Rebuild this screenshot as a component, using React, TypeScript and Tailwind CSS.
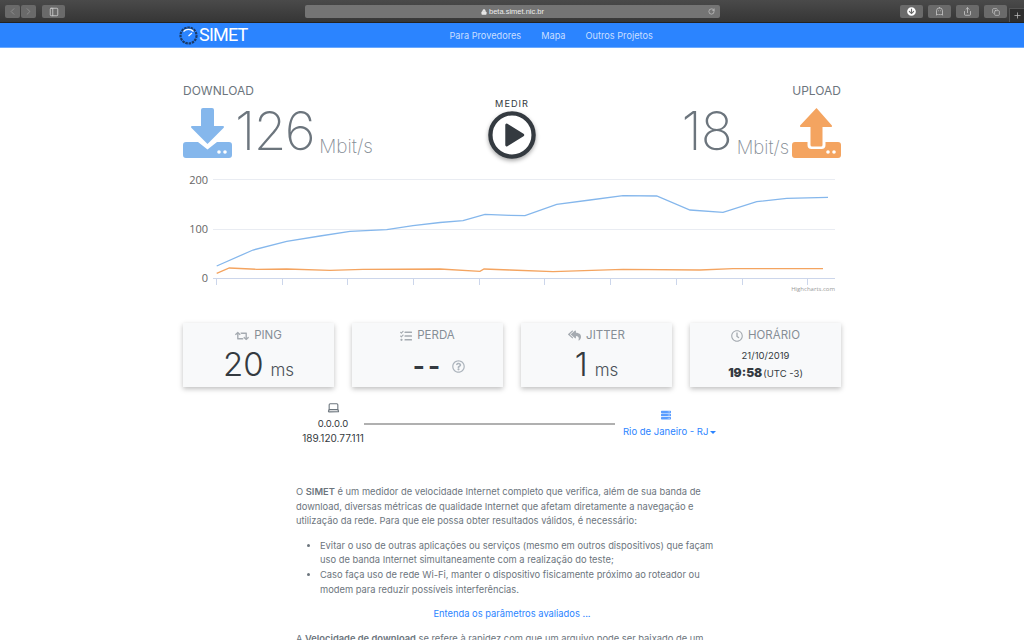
import { ChevronLeft, ChevronRight, Lock, Plus, RotateCw, Share, Copy, PanelLeft, Laptop, Ghost } from 'lucide-react';
import { FaRetweet, FaTasks, FaReplyAll, FaRegClock, FaRegQuestionCircle, FaServer, FaArrowCircleDown } from 'react-icons/fa';

const blueLine = '216.7,266 253,250 286.7,241.3 320,236 350,231.3 386.7,229.7 413,225.7 440,222.5 463,220.7 485,214.3 510,215.3 525,215.7 556.7,204.3 590,200 623,195.7 656.7,196 690,210 723,212.3 756.7,201.7 786.7,198.3 828,197.3';
const orangeLine = '216.7,273.3 229.3,268 256.7,269.3 286.7,269 330,270.3 363,269.3 440,269 480,271.3 484,269 510,270 553,271.7 623,269.3 700,270 733,268.7 823,268.7';
const ticks = [216, 282, 347, 413, 479, 544, 610, 676, 742, 807];

function Tray({ color, kind }: { color: string; kind: 'down' | 'up' }) {
  return (
    <svg width="49" height="50" viewBox="0 0 49 50" className="shrink-0">
      {kind === 'down' ? (
        <>
          <path d="M0 37a3 3 0 0 1 3-3h12l9.500 7.500L34 34h12a3 3 0 0 1 3 3v10a3 3 0 0 1-3 3H3a3 3 0 0 1-3-3z" fill={color} />
          <path d="M18 2a2 2 0 0 1 2-2h9a2 2 0 0 1 2 2v16h9a1 1 0 0 1 .7 1.700L24.500 36 8.300 19.700A1 1 0 0 1 9 18h9z" fill={color} />
          <circle cx="36" cy="44" r="1.800" fill="#fff" />
          <circle cx="42" cy="44" r="1.800" fill="#fff" />
        </>
      ) : (
        <>
          <path d="M0 37a3 3 0 0 1 3-3h12.500v3a4 4 0 0 0 4 4h10a4 4 0 0 0 4-4v-3H46a3 3 0 0 1 3 3v10a3 3 0 0 1-3 3H3a3 3 0 0 1-3-3z" fill={color} />
          <path d="M18.500 37a1.500 1.500 0 0 0 1.500 1.500h9a1.500 1.500 0 0 0 1.500-1.500V19h8.500a1 1 0 0 0 .7-1.700L24.500 0 8.300 17.300A1 1 0 0 0 9 19h9.500z" fill={color} />
          <circle cx="36" cy="44" r="1.800" fill="#fff" />
          <circle cx="42" cy="44" r="1.800" fill="#fff" />
        </>
      )}
    </svg>
  );
}

function Chart() {
  return (
    <svg width="1024" height="130" viewBox="0 170 1024 130" className="block ml-[-183px] mt-[-1px]">
      {[179.5, 229.5].map((y) => (
        <line key={y} x1="213" x2="835" y1={y} y2={y} stroke="#e9ecf2" />
      ))}
      <line x1="213" x2="835" y1="278.500" y2="278.500" stroke="#ccd6eb" />
      {ticks.map((x) => (
        <line key={x} x1={x + 0.5} x2={x + 0.5} y1="278" y2="285" stroke="#ccd6eb" />
      ))}
      <polyline points={blueLine} fill="none" stroke="#85b7ec" strokeWidth="1.300" />
      <polyline points={orangeLine} fill="none" stroke="#f4a460" strokeWidth="1.300" />
      <g fill="#666666" fontSize="11" textAnchor="end" fontFamily="'Open Sans', sans-serif">
        <text x="208" y="183.500">200</text>
        <text x="208" y="233">100</text>
        <text x="208" y="282">0</text>
      </g>
      <text x="835" y="290.500" textAnchor="end" fontSize="6" fill="#999999" fontFamily="'Open Sans', sans-serif">Highcharts.com</text>
    </svg>
  );
}

function Card({ icon, title, children }: { icon: React.ReactNode; title: string; children: React.ReactNode }) {
  return (
    <div className="w-[151px] h-[64px] bg-[#f8f9fa] shadow-[0_2px_5px_rgba(0,0,0,0.25)] flex flex-col items-center pt-[5px]">
      <div className="flex items-center gap-[5px] text-[11.500px] leading-[15px] text-[#868e96]">
        <span className="text-[#a5abb1]">{icon}</span>
        {title}
      </div>
      {children}
    </div>
  );
}

function ChromeButton({ children, w = 'w-[23px]' }: { children: React.ReactNode; w?: string }) {
  return <div className={`${w} h-[13px] rounded-[2px] bg-[#6a6a6a] flex items-center justify-center text-[#cfcfcf]`}>{children}</div>;
}

export default function App() {
  return (
    <div className="h-[640px] w-[1024px] overflow-hidden bg-white font-['Inter',sans-serif]">
      {/* browser chrome */}
      <div className="h-[23px] bg-gradient-to-b from-[#4a4a4a] to-[#363636] border-b border-[#222] flex items-start pt-[5px] pl-[5px] relative">
        <div className="flex gap-px">
          <ChromeButton w="w-[15px]"><ChevronLeft size={11} className="text-[#8f8f8f]" /></ChromeButton>
          <ChromeButton w="w-[15px]"><ChevronRight size={11} className="text-[#8f8f8f]" /></ChromeButton>
        </div>
        <div className="ml-[6px]"><ChromeButton><PanelLeft size={10} /></ChromeButton></div>
        <div className="ml-[240px] w-[415px] h-[13px] rounded-[2px] bg-[#747474] flex items-center justify-center relative text-[7.500px] text-[#ececec] font-['Liberation_Sans',sans-serif]">
          <Lock size={6} className="mr-[2px]" fill="#e6e6e6" />
          beta.simet.nic.br
          <RotateCw size={7} className="absolute right-[5px] text-[#d8d8d8]" />
        </div>
        <div className="ml-[180px] flex gap-[5px]">
          <ChromeButton><FaArrowCircleDown size={9} className="text-white" /></ChromeButton>
          <ChromeButton><Ghost size={9} /></ChromeButton>
          <ChromeButton><Share size={9} /></ChromeButton>
          <ChromeButton><Copy size={8} /></ChromeButton>
        </div>
        <div className="absolute right-0 top-[8px] w-[15px] h-[14px] bg-[#2e2e2e] border-l border-t border-[#555] flex items-center justify-center text-[#bdbdbd]">
          <Plus size={9} />
        </div>
      </div>

      {/* navbar */}
      <nav className="h-[24px] bg-[#2b84ff] border-b border-[#6aa9ff] box-content -mb-px">
        <div className="w-[658px] mx-auto h-full flex items-center relative">
          <svg width="19" height="19" viewBox="0 0 19 19" className="ml-[-4px] shrink-0">
            <circle cx="9.500" cy="9.500" r="8" fill="none" stroke="#1b3a66" strokeWidth="2.200" strokeDasharray="2.500 0.800" />
            <path d="M4.500 5.500A7 7 0 0 1 14.500 5.500" fill="none" stroke="#ffffff" strokeWidth="1.200" />
            <path d="M9.500 10L13 7" stroke="#ffffff" strokeWidth="1.200" />
          </svg>
          <span className="text-[18px] leading-none text-white font-['Roboto',sans-serif] tracking-[-0.8px] ml-px">SIMET</span>
          <div className="ml-[202px] mt-px flex gap-[20px] text-[9.200px] text-[#c9dfff]">
            <span>Para Provedores</span>
            <span>Mapa</span>
            <span>Outros Projetos</span>
          </div>
        </div>
      </nav>

      <main className="w-[658px] mx-auto">
        {/* speeds */}
        <div className="flex justify-between pt-[36px] h-[124px] relative">
          <div>
            <div className="text-[12px] leading-[15px] text-[#6c757d]">DOWNLOAD</div>
            <div className="flex items-end mt-[7px] text-[#6c757d] font-[250]">
              <Tray color="#85b7ec" kind="down" />
              <span className="text-[53px] leading-[53px] ml-[3px] tracking-[-1.500px]">126</span>
              <span className="text-[19px] leading-[20px] ml-[5px] mb-[1px] text-[#868e96]">Mbit/s</span>
            </div>
          </div>
          <div className="absolute left-[305px] top-[51px] w-[48px] flex flex-col items-center">
            <div className="text-[9.200px] leading-[12px] tracking-[1px] text-[#343a40]">MEDIR</div>
            <svg width="48" height="48" viewBox="0 0 50 50" className="mt-[1px] drop-shadow-[0_2px_2px_rgba(0,0,0,0.35)]">
              <circle cx="25" cy="25" r="22.500" fill="#fff" stroke="#343a40" strokeWidth="4.500" />
              <path d="M18 14.500a1.500 1.500 0 0 1 2.200-1.300L37 23.700a1.500 1.500 0 0 1 0 2.600L20.200 36.800A1.500 1.500 0 0 1 18 35.500z" fill="#343a40" />
            </svg>
          </div>
          <div className="flex flex-col items-end">
            <div className="text-[12px] leading-[15px] text-[#6c757d]">UPLOAD</div>
            <div className="flex items-end mt-[7px] text-[#6c757d] font-[250]">
              <span className="text-[53px] leading-[53px] tracking-[-1px]">18</span>
              <span className="text-[18.500px] leading-[20px] ml-[5px] mb-[1px] mr-[3px] text-[#868e96]">Mbit/s</span>
              <Tray color="#f4a460" kind="up" />
            </div>
          </div>
        </div>

        <Chart />

        {/* cards */}
        <div className="flex justify-between mt-[23px]">
          <Card icon={<FaRetweet size={14} />} title="PING">
            <div className="flex items-baseline gap-[7px] text-[#343a40] font-light mt-[2px]">
              <span className="text-[33px] leading-[38px]">20</span>
              <span className="text-[17px] leading-none text-[#495057]">ms</span>
            </div>
          </Card>
          <Card icon={<FaTasks size={12} />} title="PERDA">
            <div className="flex items-center gap-[9px] mt-[9px] ml-[23px] text-[#343a40]">
              <span className="text-[26px] leading-[28px] tracking-[3px] font-bold">--</span>
              <FaRegQuestionCircle size={13} className="text-[#adb5bd]" />
            </div>
          </Card>
          <Card icon={<FaReplyAll size={13} />} title="JITTER">
            <div className="flex items-baseline gap-[7px] text-[#343a40] font-light mt-[2px]">
              <span className="text-[33px] leading-[38px]">1</span>
              <span className="text-[17px] leading-none text-[#495057]">ms</span>
            </div>
          </Card>
          <Card icon={<FaRegClock size={12} />} title="HORÁRIO">
            <div className="text-[9.500px] leading-[12px] text-[#343a40] mt-[7px]">21/10/2019</div>
            <div className="flex items-baseline gap-px text-[#343a40] mt-[3px]">
              <span className="text-[12px] leading-[15px] font-black">19:58</span>
              <span className="text-[9.500px]">(UTC -3)</span>
            </div>
          </Card>
        </div>

        {/* route */}
        <div className="flex items-start mt-[14px] ml-[119px] text-[9.500px]">
          <div className="flex flex-col items-center w-[62px] text-[#343a40] leading-[15px]">
            <Laptop size={13} className="text-[#6c757d]" />
            <span className="mt-[2px]">0.0.0.0</span>
            <span className="text-[10px]">189.120.77.111</span>
          </div>
          <div className="w-[251px] h-[2px] bg-[#b0b0b0] mt-[22px]" />
          <div className="flex flex-col items-center ml-[8px] mt-[9px] text-[#2b84ff]">
            <FaServer size={10} className="text-[#5a9dff] mr-[8px]" />
            <span className="mt-[5px] leading-[14px] flex items-center gap-[2px]">
              Rio de Janeiro - RJ
              <span className="inline-block border-x-[3px] border-t-[3px] border-x-transparent border-t-[#2b84ff]" />
            </span>
          </div>
        </div>

        {/* text */}
        <div className="w-[432px] mx-auto mt-[39px] text-[9.350px] leading-[14.600px] text-[#6c757d]">
          <p>
            O <b className="font-semibold">SIMET</b> é um medidor de velocidade Internet completo que verifica, além de sua banda de download, diversas métricas de qualidade Internet que afetam diretamente a navegação e utilização da rede. Para que ele possa obter resultados válidos, é necessário:
          </p>
          <ul className="list-disc pl-[24px] mt-[10px]">
            <li>Evitar o uso de outras aplicações ou serviços (mesmo em outros dispositivos) que façam uso de banda Internet simultaneamente com a realização do teste;</li>
            <li>Caso faça uso de rede Wi-Fi, manter o dispositivo fisicamente próximo ao roteador ou modem para reduzir possíveis interferências.</li>
          </ul>
          <p className="text-center text-[#2b84ff] mt-[10px]">Entenda os parâmetros avaliados ...</p>
          <p className="mt-[10px]">
            A <b className="font-semibold">Velocidade de download</b> se refere à rapidez com que um arquivo pode ser baixado de um servidor.
          </p>
        </div>
      </main>
    </div>
  );
}
